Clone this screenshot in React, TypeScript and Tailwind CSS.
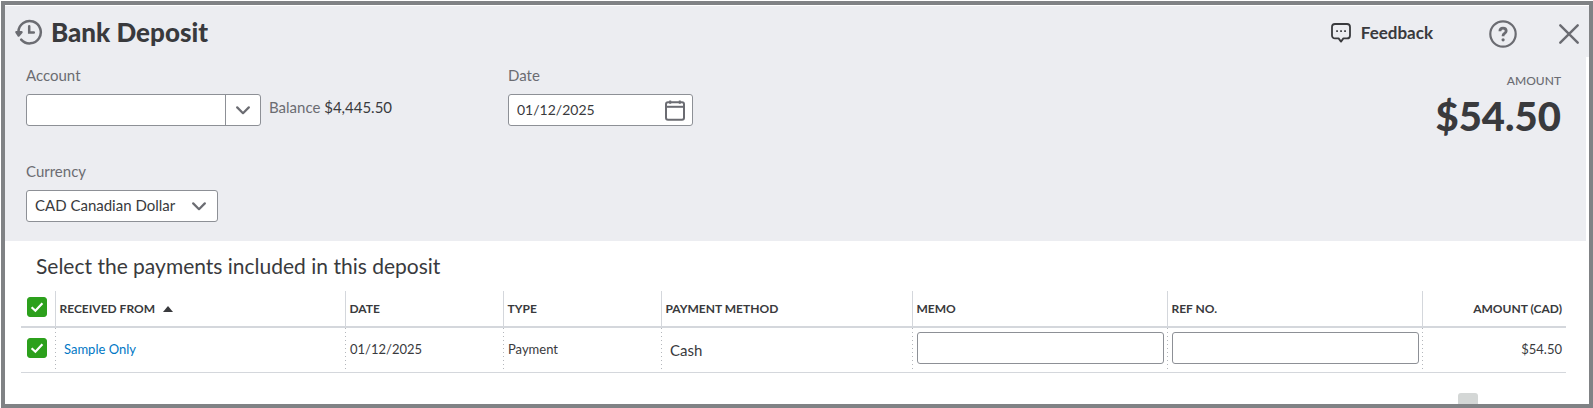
import React from "react";

const payments = [
  { id: 1, from: "Sample Only", date: "01/12/2025", type: "Payment", method: "Cash", amount: "$54.50" },
];

function HistoryIcon() {
  return (
    <svg viewBox="0 0 28 28" className="size-7 text-[#6b6c72]" fill="none" stroke="currentColor" strokeWidth="2.5" strokeLinecap="round" aria-hidden="true">
      <path d="M3.4 13.6A11.2 11.2 0 1 1 6.2 21.6" />
      <path d="M14.2 8.2v6.2h4.6" />
      <path d="M1.6 14.2h4.8L3.6 17.4z" fill="currentColor" strokeWidth="2.6" strokeLinejoin="round" />
    </svg>
  );
}

function FeedbackIcon() {
  return (
    <svg viewBox="0 0 20 20" className="size-5" fill="none" stroke="currentColor" strokeWidth="1.8" strokeLinejoin="round" aria-hidden="true">
      <path d="M4 1h12a3 3 0 0 1 3 3v8.4a3 3 0 0 1-3 3h-3.6L10 18.6l-2.4-3.2H4a3 3 0 0 1-3-3V4a3 3 0 0 1 3-3z" />
      <path d="M5.2 8.2h1.7M9.2 8.2h1.7M13.2 8.2h1.7" strokeWidth="1.7" />
    </svg>
  );
}

function HelpIcon() {
  return (
    <svg viewBox="0 0 28 28" className="size-7" fill="none" stroke="currentColor" strokeWidth="2.2" aria-hidden="true">
      <circle cx="14" cy="14" r="12.7" />
      <path d="M10.9 11.2c0-1.9 1.3-3.1 3.1-3.1s3.2 1.2 3.2 2.9c0 2.4-3.1 2.4-3.1 4.6v.7" strokeWidth="2.8" />
      <circle cx="14.1" cy="19.8" r="1.6" fill="currentColor" stroke="none" />
    </svg>
  );
}

function CloseIcon() {
  return (
    <svg viewBox="0 0 20 20" className="size-5" fill="none" stroke="currentColor" strokeWidth="2.4" strokeLinecap="round" aria-hidden="true">
      <path d="M1.3 1.3l17.4 17.4M18.7 1.3L1.3 18.7" />
    </svg>
  );
}

function Chevron({ className = "" }: { className?: string }) {
  return (
    <svg viewBox="0 0 14 9" className={`h-[9px] w-[14px] text-[#6b6c72] ${className}`} fill="none" stroke="currentColor" strokeWidth="2.2" strokeLinecap="round" strokeLinejoin="round" aria-hidden="true">
      <path d="M1.2 1.4L7 7.2l5.8-5.8" />
    </svg>
  );
}

function CalendarIcon() {
  return (
    <svg viewBox="0 0 20 21" className="h-[21px] w-5" fill="none" stroke="currentColor" strokeWidth="2" aria-hidden="true">
      <rect x="1" y="2.2" width="18" height="17.6" rx="2" />
      <path d="M1 6.8h18" />
      <path d="M5.2 0.4v3.4M14.8 0.4v3.4" />
    </svg>
  );
}

function Check({ label }: { label: string }) {
  return (
    <span className="grid size-5">
      <input
        type="checkbox"
        defaultChecked
        aria-label={label}
        className="peer col-start-1 row-start-1 size-5 appearance-none rounded-[3px] border border-[#8d9096] bg-white checked:border-[#2ca01c] checked:bg-[#2ca01c]"
      />
      <svg viewBox="0 0 20 20" className="pointer-events-none col-start-1 row-start-1 hidden size-5 peer-checked:block" fill="none" stroke="#fff" strokeWidth="2.2" aria-hidden="true">
        <path d="M4.6 10.2l3.8 3.6 7-7.6" />
      </svg>
    </span>
  );
}

const th = "border-l border-[#d4d7dc] pt-[1px] pl-1 text-left font-bold";
const td = "p-0 align-top";
const dotted = "h-[42px] bg-[repeating-linear-gradient(to_bottom,#b4b7bc_0_1px,transparent_1px_4px)] bg-[length:1px_100%] bg-no-repeat pl-[5px]";
const field = "h-8 rounded-[3px] border border-[#8d9096] bg-white";
const label = "block h-[30px] text-[15px] leading-[22px] text-[#6b6c72]";

export default function App() {
  return (
    <div className="min-h-screen bg-white pt-px pl-px font-['Lato','Open_Sans',sans-serif] text-sm text-[#393a3d]">
      <main className="flex min-h-[calc(100vh-1px)] flex-col border-4 border-[#808285] bg-white pt-px">
        <header>
          <div className="flex h-[51px] items-start justify-between bg-[#ecedf1] pt-3 pr-[10px] pl-[10px]">
            <h1 className="flex items-center gap-2 text-[26px] leading-7 font-black">
              <HistoryIcon />
              Bank Deposit
            </h1>
            <div className="flex h-8 items-center">
              <button type="button" className="flex items-center gap-[10px] pb-[2px] text-[17px] leading-6 font-bold">
                <FeedbackIcon />
                Feedback
              </button>
              <button type="button" aria-label="Help" className="ml-14 text-[#6b6c72]">
                <HelpIcon />
              </button>
              <button type="button" aria-label="Close" className="ml-[42px] text-[#6b6c72]">
                <CloseIcon />
              </button>
            </div>
          </div>
          <div className="mr-[3px] bg-[#ecedf1] pt-[7px] pr-[25px] pb-[19px] pl-[21px]">
            <div className="flex items-start">
              <div className="w-[482px]">
                <label htmlFor="account" className={label}>Account</label>
                <div className="flex">
                  <div className={`flex w-[235px] ${field}`}>
                    <input id="account" type="text" className="min-w-0 flex-1 px-2 outline-none" />
                    <button type="button" aria-label="Show accounts" className="flex w-[35px] items-center justify-center border-l border-[#8d9096]">
                      <Chevron />
                    </button>
                  </div>
                  <p className="ml-2 text-[15px] leading-[26px] text-[#6b6c72]">
                    Balance <span className="text-[#393a3d]">$4,445.50</span>
                  </p>
                </div>
              </div>
              <div>
                <label htmlFor="date" className={label}>Date</label>
                <div className={`flex w-[185px] items-center pr-[7px] ${field}`}>
                  <input id="date" type="text" defaultValue="01/12/2025" className="min-w-0 flex-1 pl-2 text-sm outline-none" />
                  <button type="button" aria-label="Open calendar" className="text-[#6b6c72]">
                    <CalendarIcon />
                  </button>
                </div>
              </div>
              <div className="ml-auto h-[62px] pt-2 text-right">
                <div className="text-xs leading-[18px] font-medium text-[#6b6c72]">AMOUNT</div>
                <div className="pt-[6px] text-[40px] leading-10 font-black">$54.50</div>
              </div>
            </div>
            <div className="pt-[34px]">
              <label htmlFor="currency" className={label}>Currency</label>
              <div className="grid w-48 items-center">
                <select id="currency" defaultValue="CAD" className={`col-start-1 row-start-1 w-full appearance-none pl-2 text-[15px] ${field}`}>
                  <option value="CAD">CAD Canadian Dollar</option>
                </select>
                <Chevron className="pointer-events-none col-start-1 row-start-1 mr-3 justify-self-end" />
              </div>
            </div>
          </div>
        </header>

        <section className="flex-1 pt-[11px] pr-[23px] pl-4">
          <h2 className="ml-[15px] h-[39px] text-[21px] leading-7">Select the payments included in this deposit</h2>
          <table className="w-full table-fixed border-collapse">
            <colgroup>
              <col className="w-[34px]" />
              <col className="w-[290px]" />
              <col className="w-[158px]" />
              <col className="w-[158px]" />
              <col className="w-[251px]" />
              <col className="w-[255px]" />
              <col className="w-[255px]" />
              <col className="w-[144px]" />
            </colgroup>
            <thead>
              <tr className="h-9 border-b-2 border-[#d4d7dc] text-xs">
                <th className="pb-[3px] pl-[6px]"><Check label="Select all payments" /></th>
                <th className={th} aria-sort="ascending">
                  <span className="flex items-center gap-2">
                    RECEIVED FROM
                    <svg viewBox="0 0 10 6" className="h-[6px] w-[10px]" fill="currentColor" aria-hidden="true"><path d="M5 0l5 6H0z" /></svg>
                  </span>
                </th>
                <th className={th}>DATE</th>
                <th className={th}>TYPE</th>
                <th className={th}>PAYMENT METHOD</th>
                <th className={th}>MEMO</th>
                <th className={th}>REF NO.</th>
                <th className="border-l border-[#d4d7dc] pt-[1px] pr-1 text-right font-bold">AMOUNT (CAD)</th>
              </tr>
            </thead>
            <tbody>
              {payments.map((p) => (
                <tr key={p.id} className="h-[45px] border-b border-[#d4d7dc] text-[13px] leading-[42px]">
                  <td className="pt-[10px] pl-[6px] align-top"><Check label={`Select payment from ${p.from}`} /></td>
                  <td className={td}><div className={dotted}><a href="#payment" className="ml-1 text-[#0077c5]">{p.from}</a></div></td>
                  <td className={td}><div className={dotted}>{p.date}</div></td>
                  <td className={td}><div className={dotted}>{p.type}</div></td>
                  <td className={td}><div className={`${dotted} pt-px text-[15px]`}><span className="ml-1">{p.method}</span></div></td>
                  <td className={td}><div className={`${dotted} flex pt-1 pr-[3px]`}><input type="text" aria-label="Memo" className={`w-full px-2 ${field}`} /></div></td>
                  <td className={td}><div className={`${dotted} flex pt-1 pr-[3px]`}><input type="text" aria-label="Reference number" className={`w-full px-2 ${field}`} /></div></td>
                  <td className={td}><div className={`${dotted} pr-1 text-right`}>{p.amount}</div></td>
                </tr>
              ))}
            </tbody>
          </table>
        </section>

        <div className="flex justify-end pr-[111px]">
          <div className="h-[11px] w-5 rounded-t-[3px] bg-[#d4d7d6]" />
        </div>
      </main>
    </div>
  );
}
